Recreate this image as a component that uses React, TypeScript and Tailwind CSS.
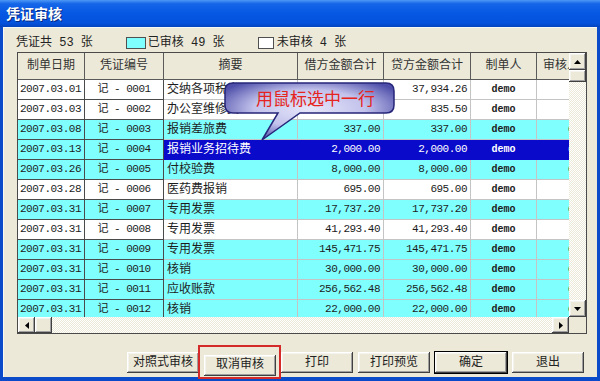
import React from "react";

type Kind = "w" | "c" | "s";

const rows: { d: string; n: string; s: string; a: string; k: Kind }[] = [
  { d: "2007.03.01", n: "0001", s: "交纳各项税金", a: "37,934.26", k: "w" },
  { d: "2007.03.03", n: "0002", s: "办公室维修费", a: "835.50", k: "w" },
  { d: "2007.03.08", n: "0003", s: "报销差旅费", a: "337.00", k: "c" },
  { d: "2007.03.13", n: "0004", s: "报销业务招待费", a: "2,000.00", k: "s" },
  { d: "2007.03.26", n: "0005", s: "付校验费", a: "8,000.00", k: "c" },
  { d: "2007.03.28", n: "0006", s: "医药费报销", a: "695.00", k: "w" },
  { d: "2007.03.31", n: "0007", s: "专用发票", a: "17,737.20", k: "c" },
  { d: "2007.03.31", n: "0008", s: "专用发票", a: "41,293.40", k: "w" },
  { d: "2007.03.31", n: "0009", s: "专用发票", a: "145,471.75", k: "c" },
  { d: "2007.03.31", n: "0010", s: "核销", a: "30,000.00", k: "c" },
  { d: "2007.03.31", n: "0011", s: "应收账款", a: "256,562.48", k: "c" },
  { d: "2007.03.31", n: "0012", s: "核销", a: "22,000.00", k: "c" },
];

const num = "font-['Liberation_Mono','Noto_Sans_CJK_SC',monospace] text-[11px] tracking-[-0.5px]";
const bevel =
  "bg-[#ece9d8] shadow-[inset_-1px_-1px_#404040,inset_1px_1px_#ffffff,inset_-2px_-2px_#a0a0a0,inset_2px_2px_#f4f3ee]";
const track = "bg-[#f4f2ea] bg-[repeating-conic-gradient(#ffffff_0_25%,#ece9d8_0_50%)] bg-[length:2px_2px]";

function Arrow({ dir }: { dir: "up" | "down" | "left" | "right" }) {
  const pts = {
    up: "0,4 7,4 3.5,0",
    down: "0,0 7,0 3.5,4",
    left: "4,0 4,7 0,3.5",
    right: "0,0 0,7 4,3.5",
  }[dir];
  const w = dir === "up" || dir === "down" ? 7 : 4;
  const h = dir === "up" || dir === "down" ? 4 : 7;
  return (
    <svg width={w} height={h} viewBox={`0 0 ${w} ${h}`}>
      <polygon points={pts} fill="#000" />
    </svg>
  );
}

function Row({ r }: { r: (typeof rows)[number] }) {
  const bg = r.k === "w" ? "bg-white" : "bg-[#80ffff]";
  const rb = r.k === "s" ? "bg-[#0a0acb] text-white border-[#0a0acb]" : bg + " text-[#1c1c1c] border-[#c4c4c4]";
  return (
    <div className="flex h-[20px] shrink-0">
      <div className={`w-[67px] shrink-0 border-r border-b border-[#4a4a4a] ${bg} pl-[2px] flex items-center text-[#1c1c1c] ${num}`}>
        {r.d}
      </div>
      <div className={`w-[79px] shrink-0 border-r border-b border-[#4a4a4a] ${bg} flex items-center justify-center text-[#1c1c1c] ${num}`}>
        记 - {r.n}
      </div>
      <div className={`w-[134px] shrink-0 border-r border-b ${rb} pl-[3px] flex items-center text-[12px]`}>{r.s}</div>
      <div className={`w-[86px] shrink-0 border-r border-b ${rb} pr-[3px] flex items-center justify-end ${num}`}>{r.a}</div>
      <div className={`w-[87px] shrink-0 border-r border-b ${rb} pr-[3px] flex items-center justify-end ${num}`}>{r.a}</div>
      <div className={`w-[66px] shrink-0 border-r border-b ${rb} flex items-center justify-center font-['Liberation_Mono',monospace] text-[10px] font-bold`}>
        demo
      </div>
      <div className={`w-[80px] shrink-0 border-b ${rb} pl-[31px] flex items-center font-['Liberation_Mono',monospace] text-[10px]`}>
        {r.k === "w" ? "" : "demo"}
      </div>
    </div>
  );
}

function Btn({ label, def }: { label: string; def?: boolean }) {
  return (
    <button
      className={`h-[21px] w-[72px] text-[12px] text-[#222] ${bevel} ${def ? "outline outline-1 outline-black" : ""}`}
    >
      {label}
    </button>
  );
}

export default function App() {
  return (
    <div className="w-[600px] h-[381px] bg-[#0b4ac8] flex flex-col overflow-hidden relative font-['Liberation_Mono','Noto_Sans_CJK_SC',monospace] text-[#222]">
      <div className="h-[27px] shrink-0 bg-[linear-gradient(180deg,#4d97f5_0%,#1566e8_14%,#0657e3_50%,#0552dc_85%,#0443be_100%)] flex items-center pl-[6px]">
        <span className="font-['Noto_Sans_CJK_SC',sans-serif] text-[14px] font-bold text-white [text-shadow:1px_1px_#0a2a80]">
          凭证审核
        </span>
      </div>

      <div className="flex-1 mx-[3px] mb-[4px] bg-[#ece9d8] flex flex-col border-t border-l border-white/70">
        <div className="h-[14px] mt-[8px] pl-[12px] flex items-center text-[12px] text-[#222]">
          <span>凭证共 53 张</span>
          <span className="ml-[33px] w-[20px] h-[12px] bg-[#80ffff] border border-[#505050]" />
          <span className="ml-[2px]">已审核 49 张</span>
          <span className="ml-[33px] w-[16px] h-[12px] bg-white border border-[#505050]" />
          <span className="ml-[3px]">未审核 4 张</span>
        </div>

        <div className="mt-[2px] ml-[13px] w-[570px] border border-[#4a4a4a] bg-[#ece9d8] flex flex-col">
          <div className="flex">
            <div className="w-[551px] h-[264px] overflow-hidden flex flex-col">
              <div className="flex h-[27px] shrink-0 text-[12px] text-[#333]">
                <div className="w-[67px] shrink-0 border-r border-b border-[#5a5a5a] flex items-center justify-center">制单日期</div>
                <div className="w-[79px] shrink-0 border-r border-b border-[#5a5a5a] flex items-center justify-center">凭证编号</div>
                <div className="w-[134px] shrink-0 border-r border-b border-[#5a5a5a] flex items-center justify-center">摘要</div>
                <div className="w-[86px] shrink-0 border-r border-b border-[#5a5a5a] flex items-center justify-center">借方金额合计</div>
                <div className="w-[87px] shrink-0 border-r border-b border-[#5a5a5a] flex items-center justify-center">贷方金额合计</div>
                <div className="w-[66px] shrink-0 border-r border-b border-[#5a5a5a] flex items-center justify-center">制单人</div>
                <div className="w-[80px] shrink-0 border-b border-[#5a5a5a] pl-[6px] flex items-center">审核人</div>
              </div>
              {rows.map((r) => (
                <Row key={r.n} r={r} />
              ))}
            </div>
            <div className="w-[17px] h-[264px] flex flex-col">
              <div className={`h-[17px] shrink-0 flex items-center justify-center ${bevel}`}>
                <Arrow dir="up" />
              </div>
              <div className={`h-[12px] shrink-0 ${bevel}`} />
              <div className={`flex-1 ${track}`} />
              <div className={`h-[17px] shrink-0 flex items-center justify-center ${bevel}`}>
                <Arrow dir="down" />
              </div>
            </div>
          </div>
          <div className="flex h-[16px]">
            <div className="w-[551px] flex">
              <div className={`w-[17px] shrink-0 flex items-center justify-center ${bevel}`}>
                <Arrow dir="left" />
              </div>
              <div className={`w-[17px] shrink-0 ${bevel}`} />
              <div className={`flex-1 ${track}`} />
              <div className={`w-[17px] shrink-0 flex items-center justify-center ${bevel}`}>
                <Arrow dir="right" />
              </div>
            </div>
            <div className="w-[17px] bg-[#ece9d8]" />
          </div>
        </div>

        <div className="mt-[18px] flex justify-end gap-[5px] pr-[13px]">
          <Btn label="对照式审核" />
          <div className="relative">
            <Btn label="取消审核" />
            <div className="absolute left-[-6px] right-[-5px] top-[-7px] bottom-[-3px] border-2 border-[#d42a2a]" />
          </div>
          <Btn label="打印" />
          <Btn label="打印预览" />
          <Btn label="确定" def />
          <Btn label="退出" />
        </div>
      </div>

      <div className="absolute left-[224px] top-[82px] w-[172px] h-[60px]">
        <svg width="172" height="60" viewBox="0 0 172 60" className="absolute inset-0">
          <defs>
            <radialGradient id="cg" cx="50%" cy="45%" r="60%">
              <stop offset="0%" stopColor="#e6e6fa" />
              <stop offset="55%" stopColor="#c2c2ec" />
              <stop offset="100%" stopColor="#4e4eaa" />
            </radialGradient>
          </defs>
          <path
            d="M9,1 H162 Q170,1 170,9 V23 Q170,31 162,31 H76 L38,58 L54,31 H9 Q1,31 1,23 V9 Q1,1 9,1 Z"
            fill="url(#cg)"
            stroke="#26267a"
            strokeWidth="1.5"
          />
        </svg>
        <span className="absolute left-[32px] top-[5px] font-['Noto_Sans_CJK_SC',sans-serif] text-[17px] leading-[22px] text-[#e52420]">
          用鼠标选中一行
        </span>
      </div>
    </div>
  );
}
